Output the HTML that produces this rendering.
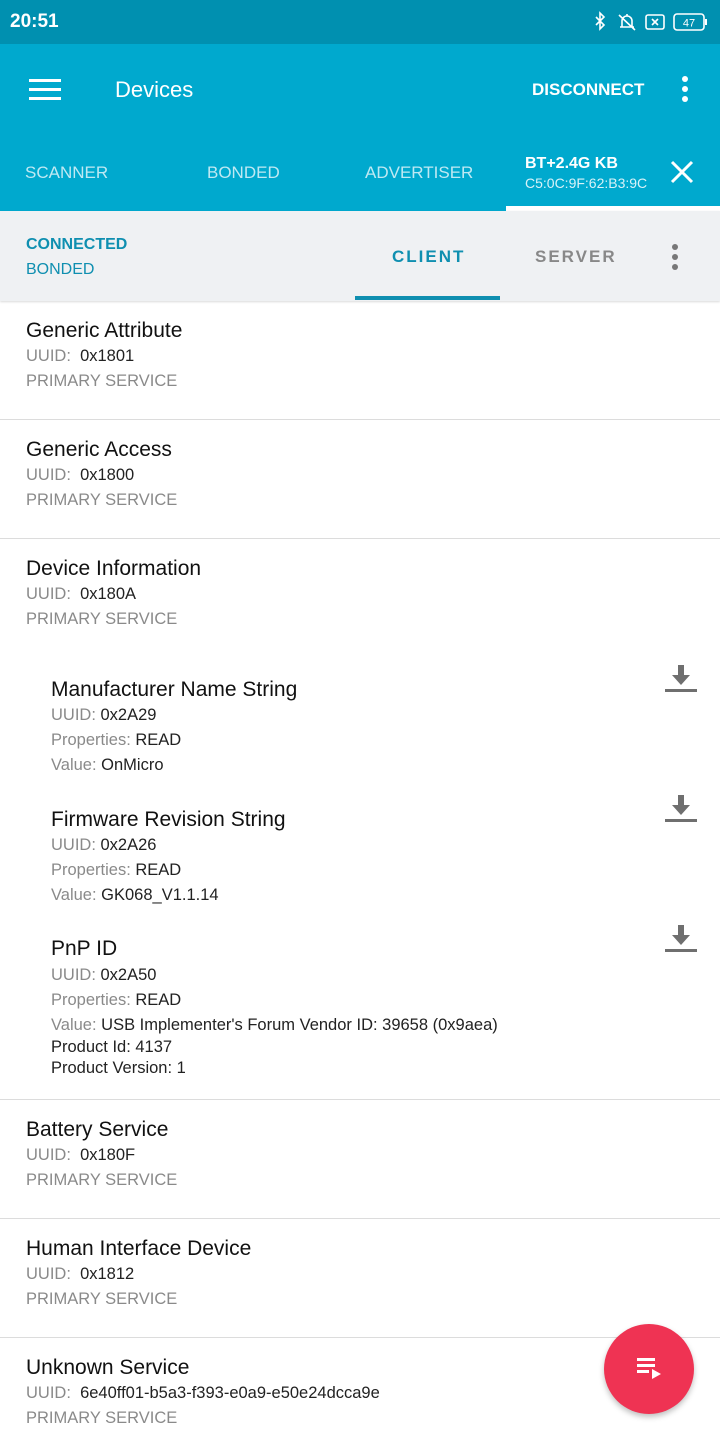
<!DOCTYPE html>
<html><head><meta charset="utf-8"><style>
*{margin:0;padding:0;box-sizing:border-box}
body{width:720px;height:1440px;overflow:hidden;background:#fff;font-family:"Liberation Sans",sans-serif;position:relative}
.a{position:absolute;white-space:nowrap;line-height:26px;height:26px}
.t{font-size:21px;color:#111}
.g{font-size:16.5px;color:#8a8a8a}
.k{color:#222}
.hr{position:absolute;left:0;width:720px;height:1px;background:#dcdcdc}
.dl{position:absolute;left:665px;width:32px;height:28px}
</style></head><body>
<div style="position:absolute;left:0;top:0;width:720px;height:44px;background:#0090b0"></div>
<div class="a" style="left:10px;top:9px;color:#fff;font-size:19px;font-weight:bold">20:51</div>
<svg style="position:absolute;left:590px;top:10px" width="125" height="24" viewBox="0 0 125 24" fill="none" stroke="#fff" stroke-width="1.6">
<path d="M6 7l8 8-4 4V3l4 4-8 8"/>
<path d="M30 17h14M32 17v-6a5 5 0 0 1 10 0v6M37 4v2M29 5l16 15"/>
<rect x="56" y="5" width="18" height="14" rx="2"/><path d="M62 9l6 6M68 9l-6 6"/>
<rect x="84" y="4" width="30" height="16" rx="3"/><path d="M116 9v6" stroke-width="2"/>
<text x="99" y="16.5" fill="#fff" stroke="none" font-size="11" text-anchor="middle" font-family="Liberation Sans">47</text>
</svg>
<div style="position:absolute;left:0;top:44px;width:720px;height:167px;background:#00a9ce"></div>
<div style="position:absolute;left:29px;top:79px;width:32px;height:3px;background:#fff;box-shadow:0 9px 0 #fff,0 18px 0 #fff"></div>
<div class="a" style="left:115px;top:77px;color:#fff;font-size:22px">Devices</div>
<div class="a" style="left:532px;top:77px;color:#fff;font-size:17px;font-weight:bold">DISCONNECT</div>
<div style="position:absolute;left:682px;top:76px;width:6px;height:6px;border-radius:3px;background:#fff;box-shadow:0 10px 0 #fff,0 20px 0 #fff"></div>
<div class="a" style="left:25px;top:160px;color:#bfe9f3;font-size:17px">SCANNER</div>
<div class="a" style="left:207px;top:160px;color:#bfe9f3;font-size:17px">BONDED</div>
<div class="a" style="left:365px;top:160px;color:#bfe9f3;font-size:17px">ADVERTISER</div>
<div class="a" style="left:525px;top:151px;color:#fff;font-size:16px;font-weight:bold">BT+2.4G KB</div>
<div class="a" style="left:525px;top:170px;color:#d8f2f8;font-size:14px">C5:0C:9F:62:B3:9C</div>
<svg style="position:absolute;left:670px;top:160px" width="24" height="24" viewBox="0 0 24 24" stroke="#fff" stroke-width="3"><path d="M2 2l20 20M22 2L2 22"/></svg>
<div style="position:absolute;left:506px;top:206px;width:214px;height:5px;background:#fff"></div>
<div style="position:absolute;left:0;top:211px;width:720px;height:90px;background:#eff1f3;box-shadow:0 1px 2px rgba(0,0,0,.15)"></div>
<div class="a" style="left:26px;top:232px;color:#0f8fb0;font-size:16px;font-weight:bold">CONNECTED</div>
<div class="a" style="left:26px;top:257px;color:#0f8fb0;font-size:16px">BONDED</div>
<div class="a" style="left:392px;top:244px;color:#0f8fb0;font-size:17px;font-weight:bold;letter-spacing:2px">CLIENT</div>
<div class="a" style="left:535px;top:244px;color:#888;font-size:17px;font-weight:bold;letter-spacing:2px">SERVER</div>
<div style="position:absolute;left:672px;top:244px;width:6px;height:6px;border-radius:3px;background:#777;box-shadow:0 10px 0 #777,0 20px 0 #777"></div>
<div style="position:absolute;left:355px;top:296px;width:145px;height:4px;background:#0f8fb0"></div>

<div class="a t" style="left:26px;top:318px">Generic Attribute</div>
<div class="a g" style="left:26px;top:343px">UUID: <span class="k">&nbsp;0x1801</span></div>
<div class="a g" style="left:26px;top:368px">PRIMARY SERVICE</div>
<div class="hr" style="top:419px"></div>
<div class="a t" style="left:26px;top:437px">Generic Access</div>
<div class="a g" style="left:26px;top:462px">UUID: <span class="k">&nbsp;0x1800</span></div>
<div class="a g" style="left:26px;top:487px">PRIMARY SERVICE</div>
<div class="hr" style="top:538px"></div>
<div class="a t" style="left:26px;top:556px">Device Information</div>
<div class="a g" style="left:26px;top:581px">UUID: <span class="k">&nbsp;0x180A</span></div>
<div class="a g" style="left:26px;top:606px">PRIMARY SERVICE</div>

<div class="a t" style="left:51px;top:677px">Manufacturer Name String</div>
<div class="a g" style="left:51px;top:702px">UUID: <span class="k">0x2A29</span></div>
<div class="a g" style="left:51px;top:727px">Properties: <span class="k">READ</span></div>
<div class="a g" style="left:51px;top:752px">Value: <span class="k">OnMicro</span></div>
<div class="a t" style="left:51px;top:807px">Firmware Revision String</div>
<div class="a g" style="left:51px;top:832px">UUID: <span class="k">0x2A26</span></div>
<div class="a g" style="left:51px;top:857px">Properties: <span class="k">READ</span></div>
<div class="a g" style="left:51px;top:882px">Value: <span class="k">GK068_V1.1.14</span></div>
<div class="a t" style="left:51px;top:936px">PnP ID</div>
<div class="a g" style="left:51px;top:962px">UUID: <span class="k">0x2A50</span></div>
<div class="a g" style="left:51px;top:987px">Properties: <span class="k">READ</span></div>
<div class="a g" style="left:51px;top:1012px">Value: <span class="k">USB Implementer's Forum Vendor ID: 39658 (0x9aea)</span></div>
<div class="a g k" style="left:51px;top:1034px;color:#222">Product Id: 4137</div>
<div class="a g k" style="left:51px;top:1055px;color:#222">Product Version: 1</div>
<svg class="dl" style="top:665px" viewBox="0 0 32 28"><path d="M13 0h6v10h6l-9 10-9-10h6z" fill="#6f6f6f"/><rect x="0" y="24" width="32" height="3" fill="#6f6f6f"/></svg>
<svg class="dl" style="top:795px" viewBox="0 0 32 28"><path d="M13 0h6v10h6l-9 10-9-10h6z" fill="#6f6f6f"/><rect x="0" y="24" width="32" height="3" fill="#6f6f6f"/></svg>
<svg class="dl" style="top:925px" viewBox="0 0 32 28"><path d="M13 0h6v10h6l-9 10-9-10h6z" fill="#6f6f6f"/><rect x="0" y="24" width="32" height="3" fill="#6f6f6f"/></svg>
<div class="hr" style="top:1099px"></div>
<div class="a t" style="left:26px;top:1117px">Battery Service</div>
<div class="a g" style="left:26px;top:1142px">UUID: <span class="k">&nbsp;0x180F</span></div>
<div class="a g" style="left:26px;top:1167px">PRIMARY SERVICE</div>
<div class="hr" style="top:1218px"></div>
<div class="a t" style="left:26px;top:1236px">Human Interface Device</div>
<div class="a g" style="left:26px;top:1261px">UUID: <span class="k">&nbsp;0x1812</span></div>
<div class="a g" style="left:26px;top:1286px">PRIMARY SERVICE</div>
<div class="hr" style="top:1337px"></div>
<div class="a t" style="left:26px;top:1355px">Unknown Service</div>
<div class="a g" style="left:26px;top:1380px">UUID: <span class="k">&nbsp;6e40ff01-b5a3-f393-e0a9-e50e24dcca9e</span></div>
<div class="a g" style="left:26px;top:1405px">PRIMARY SERVICE</div>

<div style="position:absolute;left:604px;top:1324px;width:90px;height:90px;border-radius:45px;background:#ef3353;box-shadow:0 3px 6px rgba(0,0,0,.25)"></div>
<svg style="position:absolute;left:637px;top:1358px" width="28" height="24" viewBox="0 0 28 24" fill="#fff"><rect x="0" y="0" width="18" height="3"/><rect x="0" y="6" width="18" height="3"/><rect x="0" y="12" width="12" height="3"/><path d="M15 11l9 5-9 5z"/></svg>
</body></html>
